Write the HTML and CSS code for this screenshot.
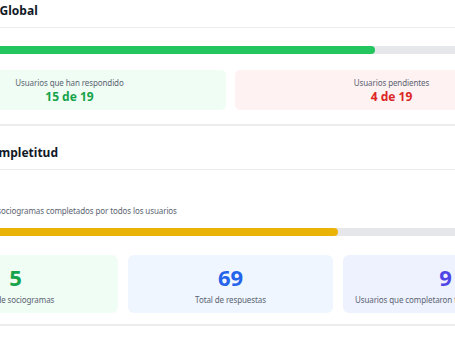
FILE: index.html
```html
<!DOCTYPE html>
<html lang="es">
<head>
<meta charset="utf-8">
<link rel="stylesheet" href="styles.css">
</head>
<body>
<div class="page">
  <section class="card card-first">
    <header class="card-header"><h2 class="title title-global">Progreso Global</h2></header>
    <div class="card-body body-global">
      <div class="track"><div class="fill fill-green" style="width:72.8%"></div></div>
      <div class="grid2">
        <div class="stat stat-green">
          <span class="stat-label">Usuarios que han respondido</span>
          <span class="stat-value green">15 de 19</span>
        </div>
        <div class="stat stat-red">
          <span class="stat-label">Usuarios pendientes</span>
          <span class="stat-value red">4 de 19</span>
        </div>
      </div>
    </div>
  </section>
  <section class="card">
    <header class="card-header"><h2 class="title title-comp">Tasa de Completitud</h2></header>
    <div class="card-body body-comp">
      <p class="desc">Porcentaje de sociogramas completados por todos los usuarios</p>
      <div class="track"><div class="fill fill-yellow" style="width:66.9%"></div></div>
      <div class="grid3">
        <div class="big big-green">
          <span class="big-value green">5</span>
          <span class="big-label">Total de sociogramas</span>
        </div>
        <div class="big big-blue">
          <span class="big-value blue">69</span>
          <span class="big-label">Total de respuestas</span>
        </div>
        <div class="big big-indigo">
          <span class="big-value indigo">9</span>
          <span class="big-label">Usuarios que completaron todos los sociogramas</span>
        </div>
      </div>
    </div>
  </section>
</div>
</body>
</html>
```

FILE: styles.css
```css
* { box-sizing: border-box; }
html, body { margin: 0; padding: 0; background: #ffffff; overflow: hidden; }
body { font-family: "Noto Sans", "Open Sans", sans-serif; color: #1f2937; }

.page {
  width: 635px;
  margin-left: -87px;
  margin-top: -16px;
}

.card {
  background: #ffffff;
  padding-top: 9px;
  border-bottom: 2px solid #ececec;
}

.card-header {
  height: 35px;
  display: flex;
  align-items: center;
  border-bottom: 1px solid #ededed;
}

.title {
  margin: 0;
  font-size: 12px;
  font-weight: 700;
  color: #111827;
  white-space: nowrap;
}
.title-global { margin-left: 30px; }
.title-comp { margin-left: 23px; }

.card-body {
  padding: 18px 0 14px;
}
.body-comp { padding-top: 35px; padding-bottom: 11px; }

.track {
  height: 8px;
  border-radius: 4px;
  background: #e5e7eb;
  overflow: hidden;
}
.fill { height: 100%; border-radius: 4px; }
.fill-green { background: #22c55e; }
.fill-yellow { background: #eab308; }

.grid2 {
  margin-top: 16px;
  display: grid;
  grid-template-columns: 1fr 1fr;
  gap: 9px;
}
.stat {
  height: 40px;
  border-radius: 5px;
  display: flex;
  flex-direction: column;
  align-items: center;
  justify-content: center;
  gap: 1px;
}
.stat-green { background: #f0fdf4; }
.stat-red { background: #fef2f2; }
.stat-label { font-size: 8px; color: #5b6472; line-height: 11px; letter-spacing: -0.1px; }
.stat-value { font-size: 12px; font-weight: 700; line-height: 15px; }

.desc {
  margin: 0 0 11px;
  padding-left: 32px;
  font-size: 8px;
  line-height: 12px;
  color: #5b6472;
  white-space: nowrap;
  letter-spacing: -0.1px;
}

.grid3 {
  margin-top: 19px;
  display: grid;
  grid-template-columns: 1fr 1fr 1fr;
  gap: 10px;
}
.big {
  height: 58px;
  border-radius: 6px;
  display: flex;
  flex-direction: column;
  align-items: center;
  justify-content: center;
  gap: 4px;
  padding-top: 2px;
}
.big-green { background: #f0fdf4; }
.big-blue { background: #eff6ff; }
.big-indigo { background: #eef2ff; }
.big-value { font-size: 22px; font-weight: 700; line-height: 26px; }
.big-label { font-size: 8px; color: #5b6472; line-height: 12px; white-space: nowrap; letter-spacing: -0.1px; }

.green { color: #16a34a; }
.red { color: #dc2626; }
.blue { color: #2563eb; }
.indigo { color: #4f46e5; }
```
